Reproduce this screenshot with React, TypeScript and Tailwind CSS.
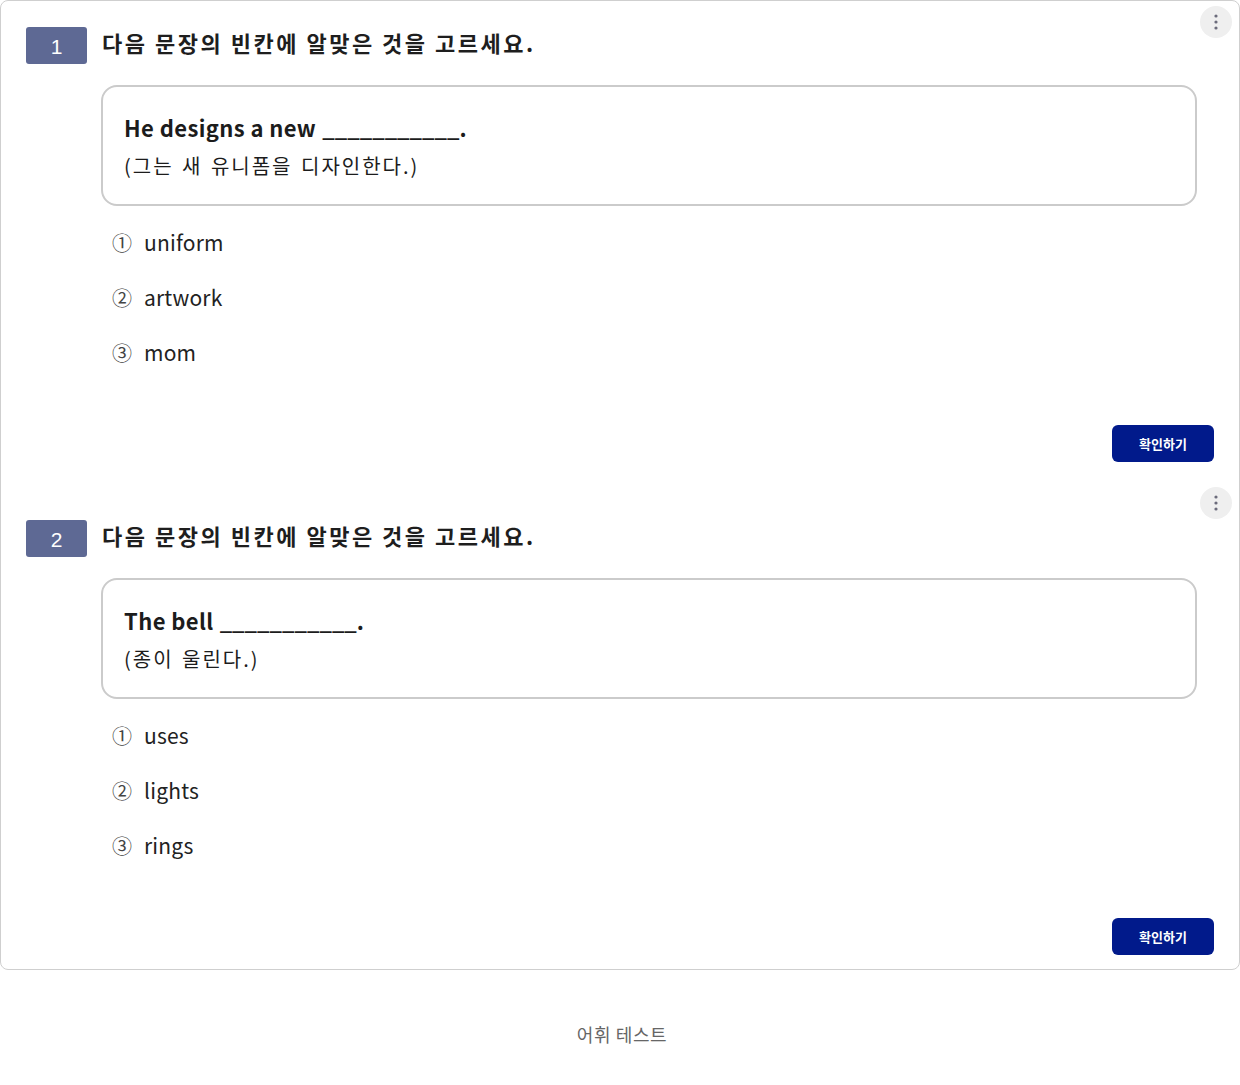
import React from 'react';

type Question = {
  no: number;
  sentence: string;
  translation: string;
  options: string[];
};

const questions: Question[] = [
  {
    no: 1,
    sentence: 'He designs a new',
    translation: '(그는 새 유니폼을 디자인한다.)',
    options: ['uniform', 'artwork', 'mom'],
  },
  {
    no: 2,
    sentence: 'The bell',
    translation: '(종이 울린다.)',
    options: ['uses', 'lights', 'rings'],
  },
];

const marks = ['①', '②', '③'];

function Kebab({ top }: { top: string }) {
  return (
    <button className={`absolute right-[-18px] ${top} flex h-[32px] w-[32px] items-center justify-center rounded-full bg-[#efefef]`}>
      <svg width="4" height="16" viewBox="0 0 4 16" fill="#6b6b7b">
        <circle cx="2" cy="2" r="1.6" />
        <circle cx="2" cy="8" r="1.6" />
        <circle cx="2" cy="14" r="1.6" />
      </svg>
    </button>
  );
}

function QuestionBlock({ q, kebabTop }: { q: Question; kebabTop: string }) {
  return (
    <div className="relative">
      <Kebab top={kebabTop} />
      {/* header */}
      <div className="flex h-[37px] items-center gap-[15px]">
        <div className="flex h-[37px] w-[61px] items-center justify-center rounded-[3px] bg-[#5e6994] pt-[2px] font-['Liberation_Sans',sans-serif] text-[21px] text-white">
          {q.no}
        </div>
        <h2 className="pb-[7px] text-[22px] font-bold leading-[30px] tracking-[2.5px] text-[#1e1e1e]">
          다음 문장의 빈칸에 알맞은 것을 고르세요.
        </h2>
      </div>

      {/* sentence box */}
      <div className="ml-[75px] mr-[17px] mt-[21px] h-[121px] rounded-[16px] border-2 border-[#cbcbcb] px-[21px] pt-[24px]">
        <p className="text-[22px] font-bold leading-[32px] text-[#1c1c1c]">
          <span className="tracking-[0.4px]">{q.sentence}</span>{' '}
          <span className="ml-[1px]">___________.</span>
        </p>
        <p className="mt-[8px] text-[20px] leading-[30px] tracking-[2px] text-[#1c1c1c] [word-spacing:2px]">{q.translation}</p>
      </div>

      {/* options */}
      <ul className="ml-[86px] mt-[9px]">
        {q.options.map((opt, i) => (
          <li key={opt} className="flex h-[55px] items-center">
            <span className="w-[32px] text-[20px] text-[#444]">{marks[i]}</span>
            <span className="text-[21px] tracking-[0.2px] text-[#222]">{opt}</span>
          </li>
        ))}
      </ul>

      <div className="mt-[45px] flex justify-end">
        <button className="h-[37px] w-[102px] rounded-[6px] bg-[#011a8b] text-[13px] font-bold text-white">
          확인하기
        </button>
      </div>
    </div>
  );
}

export default function App() {
  return (
    <div className="min-h-[1085px] bg-white font-['Noto_Sans_CJK_KR','Noto_Sans',sans-serif]">
      <div className="rounded-[8px] border border-[#cfcfcf] px-[25px] pb-[14px] pt-[26px]">
        <div className="flex flex-col gap-[58px]">
          <QuestionBlock q={questions[0]} kebabTop="top-[-21px]" />
          <QuestionBlock q={questions[1]} kebabTop="top-[-33px]" />
        </div>
      </div>
      <p className="mt-[52px] pl-[4px] text-center text-[18px] leading-[24px] tracking-[0.6px] text-[#666]">어휘 테스트</p>
    </div>
  );
}
